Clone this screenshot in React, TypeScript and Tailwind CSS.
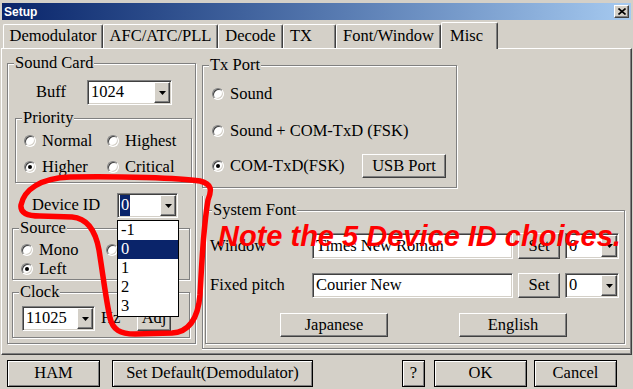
const raised =
  'border border-t-white border-l-white border-r-[#404040] border-b-[#404040] shadow-[inset_-1px_-1px_0_#808080]'
const sunken =
  'border border-t-[#808080] border-l-[#808080] border-r-white border-b-white shadow-[inset_1px_1px_0_#404040,inset_-1px_-1px_0_#d4d0c8]'

function Arrow() {
  return (
    <svg width="7" height="4" viewBox="0 0 7 4">
      <path d="M0 0h7L3.5 4z" fill="#000" />
    </svg>
  )
}

function Combo({ value, className, hl }: { value: string; className: string; hl?: boolean }) {
  return (
    <div className={`flex p-[1px] bg-white ${sunken} ${className}`}>
      <div className="flex-1 flex items-stretch pl-[1px] overflow-hidden">
        <span className={hl ? 'flex items-center bg-[#0a246a] text-white px-[1px]' : 'flex items-center pl-[1px]'}>
          {value}
        </span>
      </div>
      <div className={`w-[16px] flex items-center justify-center bg-[#d4d0c8] ${raised}`}>
        <Arrow />
      </div>
    </div>
  )
}

function Btn({ label, className }: { label: string; className: string }) {
  return <div className={`flex items-center justify-center bg-[#d4d0c8] ${raised} ${className}`}>{label}</div>
}

function Radio({ label, checked }: { label?: string; checked?: boolean }) {
  return (
    <div className="flex items-center h-[16px]">
      <span className="relative flex items-center justify-center w-[12px] h-[12px] rounded-full bg-white border border-t-[#808080] border-l-[#808080] border-r-white border-b-white shadow-[inset_1px_1px_0_#404040,inset_-1px_-1px_0_#d4d0c8]">
        {checked && <span className="w-[4px] h-[4px] rounded-full bg-black" />}
      </span>
      {label && <span className="ml-[6px] whitespace-nowrap">{label}</span>}
    </div>
  )
}

function Group({ label, className, children }: { label?: string; className: string; children?: React.ReactNode }) {
  return (
    <div className={`relative border border-[#808080] shadow-[1px_1px_0_white,inset_1px_1px_0_white] ${className}`}>
      {label && (
        <span className="absolute left-[6px] -top-[10px] bg-[#d4d0c8] px-[1px] leading-[18px] whitespace-nowrap">
          {label}
        </span>
      )}
      {children}
    </div>
  )
}

function Tab({ label, className, active }: { label: string; className: string; active?: boolean }) {
  return (
    <div
      className={[
        'flex items-center bg-[#d4d0c8] border-t border-l border-r border-t-white border-l-white border-r-[#404040] rounded-t-[2px] shadow-[inset_-1px_0_0_#808080] whitespace-nowrap',
        active ? 'relative z-10 h-[27px] -mb-[1px]' : 'h-[24px]',
        className,
      ].join(' ')}
    >
      {label}
    </div>
  )
}

export default function App() {
  return (
    <div className="relative w-[633px] h-[389px] overflow-hidden bg-[#d4d0c8] text-black font-[family-name:'Liberation_Serif',serif] text-[16.5px] leading-none">
      {/* title bar */}
      <div className="mx-[2px] mt-[3px] h-[17px] flex items-center justify-between pl-[2px] pr-[2px] bg-linear-to-r from-[#0a246a] to-[#a6caf0]">
        <span className="font-[family-name:'Liberation_Sans',sans-serif] font-bold text-[12px] text-white">Setup</span>
        <div className={`w-[15px] h-[13px] flex items-center justify-center bg-[#d4d0c8] ${raised}`}>
          <svg width="8" height="7" viewBox="0 0 8 7">
            <path d="M0.5 0.5L7.5 6.5M7.5 0.5L0.5 6.5" stroke="#000" strokeWidth="1.6" />
          </svg>
        </div>
      </div>

      {/* tabs */}
      <div className="mt-[2px] h-[26px] flex items-end pl-[3px]">
        <Tab label="Demodulator" className="w-[100px] justify-center" />
        <Tab label="AFC/ATC/PLL" className="w-[115px] justify-center" />
        <Tab label="Decode" className="w-[65px] justify-center" />
        <Tab label="TX" className="w-[53px] pl-[6px]" />
        <Tab label="Font/Window" className="w-[105px] justify-center" />
        <Tab label="Misc" active className="w-[57px] pl-[8px]" />
      </div>

      {/* tab panel */}
      <div className={`mx-[1px] h-[307px] flex ${raised}`}>
        <Group label="Sound Card" className="ml-[5px] mt-[14px] w-[189px] h-[281px] flex flex-col">
          <div className="mt-[16px] h-[25px] flex items-center">
            <span className="ml-[28px] w-[51px]">Buff</span>
            <Combo value="1024" className="w-[85px] h-[25px]" />
          </div>
          <Group label="Priority" className="mt-[13px] ml-[7px] w-[177px] h-[65px]">
            <div className="ml-[8px] mt-[14px] grid grid-cols-[83px_auto] gap-y-[10px]">
              <Radio label="Normal" />
              <Radio label="Highest" />
              <Radio label="Higher" checked />
              <Radio label="Critical" />
            </div>
          </Group>
          <div className="mt-[10px] h-[25px] flex items-center">
            <span className="ml-[24px] w-[85px]">Device ID</span>
            <Combo value="0" hl className="w-[61px] h-[25px]" />
          </div>
          <Group label="Source" className="mt-[10px] ml-[4px] w-[178px] h-[52px]">
            <div className="ml-[8px] mt-[13px] grid grid-cols-[85px_auto] gap-y-[3px]">
              <Radio label="Mono" />
              <Radio label="Stereo" />
              <Radio label="Left" checked />
            </div>
          </Group>
          <Group label="Clock" className="mt-[12px] ml-[4px] w-[178px] h-[46px]">
            <div className="mt-[13px] h-[25px] flex items-center">
              <Combo value="11025" className="ml-[9px] w-[73px] h-[25px]" />
              <span className="ml-[6px] w-[36px]">Hz</span>
              <Btn label="Adj" className="w-[34px] h-[24px]" />
            </div>
          </Group>
        </Group>

        <div className="ml-[6px] flex-1 flex flex-col">
          <Group label="Tx Port" className="mt-[16px] w-[255px] h-[123px] flex flex-col pl-[9px] pr-[10px]">
            <div className="mt-[16px] h-[24px] flex items-center">
              <Radio label="Sound" />
            </div>
            <div className="mt-[13px] h-[24px] flex items-center">
              <Radio label="Sound + COM-TxD (FSK)" />
            </div>
            <div className="mt-[11px] h-[24px] flex items-center justify-between">
              <Radio label="COM-TxD(FSK)" checked />
              <Btn label="USB Port" className="w-[84px] h-[24px]" />
            </div>
          </Group>

          <div className="mt-[8px] mr-[1px] h-[153px] border-l border-b border-[#808080] shadow-[inset_1px_0_0_white,0_1px_0_white]">
            <Group label="System Font" className="ml-[2px] mt-[14px] w-[420px] h-[134px]">
              <div className="mt-[22px] h-[26px] flex items-center">
                <span className="ml-[4px] w-[102px]">Window</span>
                <div className={`w-[201px] h-[26px] flex items-center pl-[3px] bg-white ${sunken}`}>Times New Roman</div>
                <Btn label="Set" className="ml-[5px] w-[42px] h-[26px]" />
                <Combo value="0" className="ml-[5px] w-[54px] h-[26px]" />
              </div>
              <div className="mt-[14px] h-[25px] flex items-center">
                <span className="ml-[4px] w-[102px]">Fixed pitch</span>
                <div className={`w-[201px] h-[25px] flex items-center pl-[3px] bg-white ${sunken}`}>Courier New</div>
                <Btn label="Set" className="ml-[5px] w-[42px] h-[25px]" />
                <Combo value="0" className="ml-[5px] w-[54px] h-[25px]" />
              </div>
              <div className="mt-[15px] h-[24px] flex">
                <Btn label="Japanese" className="ml-[74px] w-[108px] h-[24px]" />
                <Btn label="English" className="ml-[71px] w-[108px] h-[24px]" />
              </div>
            </Group>
          </div>
        </div>
      </div>

      {/* bottom buttons */}
      <div className="mt-[5px] h-[27px] flex">
        {[
          ['HAM', 'ml-[7px] w-[93px]'],
          ['Set Default(Demodulator)', 'ml-[12px] w-[201px]'],
          ['?', 'ml-[89px] w-[23px]'],
          ['OK', 'ml-[9px] w-[93px]'],
          ['Cancel', 'ml-[7px] w-[83px]'],
        ].map(([label, cls]) => (
          <div
            key={label}
            className={`h-[27px] flex items-center justify-center border border-black shadow-[inset_1px_1px_0_white,inset_-1px_-1px_0_#808080] ${cls}`}
          >
            {label}
          </div>
        ))}
      </div>

      {/* open Device ID list */}
      <div className="absolute left-[117px] top-[220px] w-[62px] border border-black bg-white">
        {['-1', '0', '1', '2', '3'].map((v) => (
          <div key={v} className={`h-[19px] flex items-center pl-[3px] ${v === '0' ? 'bg-[#0a246a] text-white' : ''}`}>
            {v}
          </div>
        ))}
      </div>

      {/* red annotation */}
      <svg className="absolute inset-0 pointer-events-none" width="633" height="389" viewBox="0 0 633 389">
        <path
          d="M208 200C212 190 212 184 200 181C180 178 120 176 70 177C40 178 24 190 21 205C20 213 27 216 40 216L72 217C85 218 95 228 99 250C103 275 106 300 110 318C113 330 120 334 135 334L172 333C190 332 198 318 200 295C202 260 203 230 208 200Z"
          fill="none"
          stroke="#ff0000"
          strokeWidth="5.5"
          strokeLinejoin="round"
        />
      </svg>
      <span className="absolute left-[218px] top-[222px] text-[29px] leading-none font-[family-name:'Liberation_Sans',sans-serif] font-bold italic text-[#ff0000] whitespace-nowrap">
        Note the 5 Device ID choices.
      </span>
    </div>
  )
}
